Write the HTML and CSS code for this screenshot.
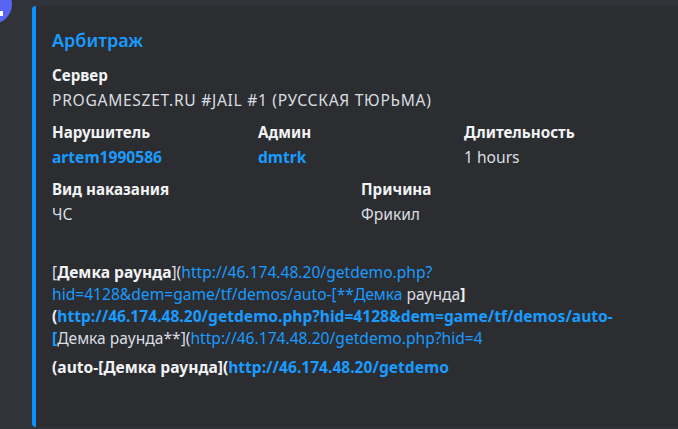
FILE: index.html
```
<!DOCTYPE html>
<html lang="ru">
<head>
<meta charset="utf-8">
<link rel="stylesheet" href="styles.css">
</head>
<body>
<div class="page">
  <div class="avatar"><span class="avatar-mark"></span></div>
  <div class="embed">
    <div class="title">Арбитраж</div>
    <div class="fields">
      <div class="field span-full">
        <div class="fname">Сервер</div>
        <div class="fvalue caps">PROGAMESZET.RU #JAIL #1 (РУССКАЯ ТЮРЬМА)</div>
      </div>
      <div class="field span-third">
        <div class="fname">Нарушитель</div>
        <div class="fvalue"><a class="link bold">artem1990586</a></div>
      </div>
      <div class="field span-third">
        <div class="fname">Админ</div>
        <div class="fvalue"><a class="link bold">dmtrk</a></div>
      </div>
      <div class="field span-third">
        <div class="fname">Длительность</div>
        <div class="fvalue">1 hours</div>
      </div>
      <div class="field span-half">
        <div class="fname">Вид наказания</div>
        <div class="fvalue">ЧС</div>
      </div>
      <div class="field span-half">
        <div class="fname">Причина</div>
        <div class="fvalue">Фрикил</div>
      </div>
      <div class="field span-full">
        <div class="fname blank">&nbsp;</div>
        <div class="fvalue desc">[<b>Демка раунда</b>](<a class="link">http://46.174.48.20/getdemo.php?</a><br><a class="link">hid=4128&amp;dem=game/tf/demos/auto-[**Демка</a> раунда<b>]</b><br><b>(<a class="link">http://46.174.48.20/getdemo.php?hid=4128&amp;dem=game/tf/demos/auto-</a></b><br><b class="link">[</b>Демка раунда**](<a class="link">http://46.174.48.20/getdemo.php?hid=4</a></div>
        <div class="fvalue desc last"><b>(auto-[Демка раунда](<a class="link">http://46.174.48.20/getdemo</a></b></div>
      </div>
    </div>
  </div>
</div>
</body>
</html>
```
FILE: styles.css
```
html, body {
  margin: 0;
  padding: 0;
  background: #313338;
  overflow: hidden;
}
.page {
  position: relative;
  width: 678px;
  height: 429px;
  padding: 6px 0 0 32px;
  box-sizing: border-box;
  overflow: hidden;
  font-family: "Noto Sans", "Open Sans", sans-serif;
}
.avatar {
  position: absolute;
  left: -28px;
  top: -16px;
  width: 40px;
  height: 40px;
  border-radius: 50%;
  background: #5865f2;
}
.avatar-mark {
  position: absolute;
  left: 28px;
  top: 27px;
  width: 3px;
  height: 5px;
  background: #ffffff;
}
.embed {
  width: 660px;
  height: 421px;
  box-sizing: border-box;
  background: #2b2d31;
  border-left: 4px solid #0a93ff;
  border-radius: 4px;
  padding: 23px 16px 16px 16px;
}
.title {
  font-size: 18px;
  line-height: 22px;
  font-weight: 600;
  color: #1a9bff;
  margin-bottom: 14px;
}
.fields {
  display: grid;
  grid-template-columns: repeat(6, 103px);
  row-gap: 11px;
}
.span-full { grid-column: span 6; }
.span-third { grid-column: span 2; }
.span-half { grid-column: span 3; }
.fname {
  font-size: 15.2px;
  line-height: 20px;
  font-weight: 700;
  color: #f2f3f5;
  margin-bottom: 4px;
  white-space: nowrap;
}
.blank { margin-bottom: 5px; }
.fvalue {
  font-size: 15.6px;
  line-height: 22px;
  color: #dbdee1;
  white-space: nowrap;
}
.caps { letter-spacing: 0.7px; }
.desc {
  line-height: 22px;
}
.desc b { color: #f2f3f5; font-weight: 700; }
.last { margin-top: 7px; }
.link { color: #1a9bff; text-decoration: none; }
b .link, .link.bold, b.link { color: #1a9bff; font-weight: 700; }
```
